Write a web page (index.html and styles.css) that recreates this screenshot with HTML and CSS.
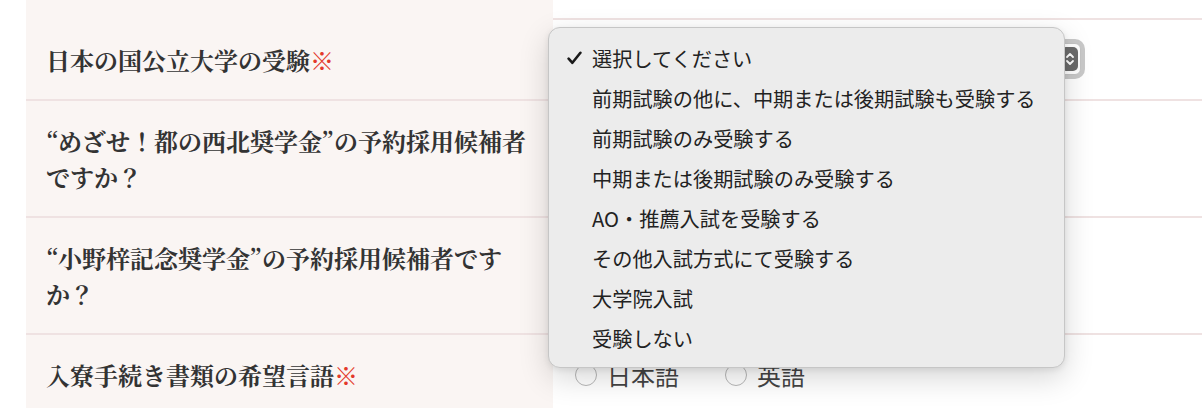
FILE: index.html
```html
<!DOCTYPE html>
<html lang="ja">

<head>
    <meta charset="UTF-8">
    <meta name="viewport" content="width=device-width, initial-scale=1.0">
    <title>入寮申込フォーム</title>
    <link rel="stylesheet" href="styles.css">
</head>

<body>
    <div class="page">
        <div class="form">
            <!-- previous row, scrolled off the top -->
            <div class="row row-cut">
                <div class="label"></div>
                <div class="field"></div>
            </div>

            <div class="row">
                <div class="label">日本の国公立大学の受験<span class="req">※</span></div>
                <div class="field">
                    <div class="select">
                        <span class="select-btn">
                            <svg width="10" height="16" viewBox="0 0 10 16">
                                <polyline points="2,6 5,3 8,6" fill="none" stroke="#fff" stroke-width="1.8" stroke-linecap="round" stroke-linejoin="round" />
                                <polyline points="2,10 5,13 8,10" fill="none" stroke="#fff" stroke-width="1.8" stroke-linecap="round" stroke-linejoin="round" />
                            </svg>
                        </span>
                    </div>
                </div>
            </div>

            <div class="row">
                <div class="label">“めざせ！都の西北奨学金”の予約採用候補者ですか？</div>
                <div class="field"></div>
            </div>

            <div class="row">
                <div class="label">“小野梓記念奨学金”の予約採用候補者ですか？</div>
                <div class="field"></div>
            </div>

            <div class="row">
                <div class="label">入寮手続き書類の希望言語<span class="req">※</span></div>
                <div class="field">
                    <label class="radio"><span class="radio-dot"></span>日本語</label>
                    <label class="radio"><span class="radio-dot"></span>英語</label>
                </div>
            </div>
        </div>

        <!-- open select menu -->
        <ul class="menu">
            <li class="menu-item selected">
                <span class="check">
                    <svg width="15" height="14" viewBox="0 0 15 14">
                        <polyline points="1.6,7.6 5.4,11.8 13.4,1.8" fill="none" stroke="#1a1a1a" stroke-width="2.6" stroke-linecap="round" stroke-linejoin="round" />
                    </svg>
                </span>選択してください
            </li>
            <li class="menu-item"><span class="check"></span>前期試験の他に、中期または後期試験も受験する</li>
            <li class="menu-item"><span class="check"></span>前期試験のみ受験する</li>
            <li class="menu-item"><span class="check"></span>中期または後期試験のみ受験する</li>
            <li class="menu-item"><span class="check"></span>AO・推薦入試を受験する</li>
            <li class="menu-item"><span class="check"></span>その他入試方式にて受験する</li>
            <li class="menu-item"><span class="check"></span>大学院入試</li>
            <li class="menu-item"><span class="check"></span>受験しない</li>
        </ul>
    </div>
</body>

</html>
```

FILE: styles.css
```css
* {
    margin: 0;
    padding: 0;
    box-sizing: border-box;
}

body {
    font-family: "Noto Sans CJK JP", sans-serif;
    background-color: #ffffff;
    color: #333333;
    overflow: hidden;
}

.page {
    position: relative;
    height: 408px;
    overflow: hidden;
}

/* Form rows */
.form {
    margin-left: 26px;
}

.row {
    display: grid;
    grid-template-columns: 527px 1fr;
    border-top: 2px solid #efe2e2;
}

.row-cut {
    height: 18px;
    border-top: none;
}

.label {
    background: #faf5f3;
    padding: 21.5px 17px 21.5px 20px;
    font-family: "Noto Serif CJK JP", "Liberation Serif", "Noto Sans CJK JP", serif;
    font-weight: 700;
    font-size: 24px;
    line-height: 36px;
    color: #333333;
}

.req {
    color: #e3392b;
    font-family: "Noto Sans CJK JP", sans-serif;
}

.field {
    display: flex;
    align-items: center;
    padding-left: 22px;
    gap: 46px;
}

/* Closed select underneath the menu */
.select {
    width: 506px;
    height: 32px;
    background: #ffffff;
    border: 1px solid #c4c4c4;
    border-radius: 6px;
    box-shadow: 0 0 0 4px #c9c9c9;
    display: flex;
    justify-content: flex-end;
    align-items: center;
    padding-right: 2px;
    margin-top: -2px;
}

.select-btn {
    width: 17px;
    height: 24px;
    background: #6b6b6b;
    border-radius: 5px;
    display: flex;
    align-items: center;
    justify-content: center;
}

.radio {
    display: flex;
    align-items: center;
    gap: 10px;
    font-size: 24px;
    color: #444444;
}

.radio-dot {
    width: 22px;
    height: 22px;
    border: 1px solid #b8b8b8;
    border-radius: 50%;
    background: #ffffff;
}

/* Native dropdown menu */
.menu {
    position: absolute;
    left: 548px;
    top: 27px;
    width: 517px;
    height: 341px;
    list-style: none;
    padding: 10px 0;
    background: #ececec;
    border: 1px solid #c6c6c6;
    border-radius: 12px;
    box-shadow: 0 10px 30px rgba(0, 0, 0, 0.16), 0 2px 6px rgba(0, 0, 0, 0.08);
}

.menu-item {
    display: flex;
    align-items: center;
    height: 40px;
    padding-left: 18px;
    font-size: 20.2px;
    color: #222222;
}

.check {
    display: flex;
    align-items: center;
    width: 25px;
    height: 20px;
}
```
